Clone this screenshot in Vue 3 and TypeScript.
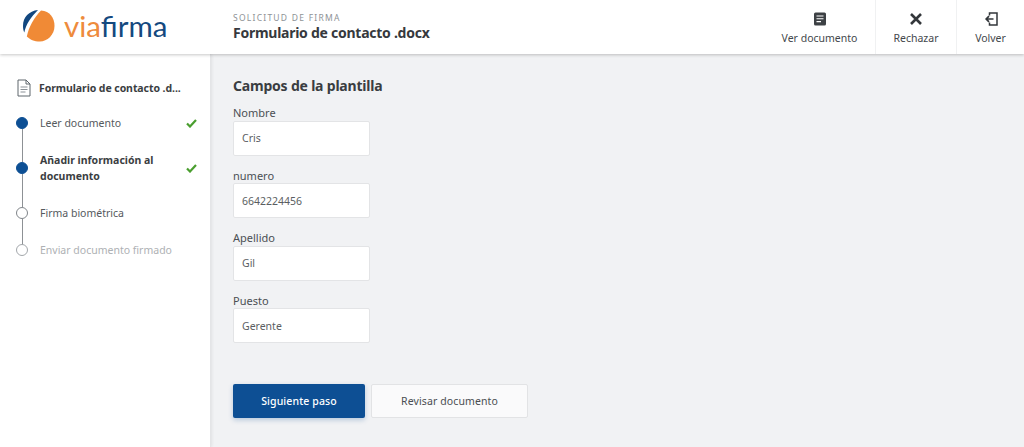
<script setup lang="ts">
interface Step { label: string; state: 'done' | 'current' | 'todo' | 'disabled'; check: boolean; bold?: boolean; line: number }
const steps: Step[] = [
  { label: 'Leer documento', state: 'done', check: true, line: 33 },
  { label: 'Añadir información al documento', state: 'done', check: true, bold: true, line: 33 },
  { label: 'Firma biométrica', state: 'todo', check: false, line: 26 },
  { label: 'Enviar documento firmado', state: 'disabled', check: false, line: 0 },
]
const fields = [
  { label: 'Nombre', value: 'Cris' },
  { label: 'numero', value: '6642224456' },
  { label: 'Apellido', value: 'Gil' },
  { label: 'Puesto', value: 'Gerente' },
]
</script>

<template>
  <div class="page">
    <header class="top">
      <div class="brand">
        <svg class="mark" width="34" height="34" viewBox="0 0 34 34">
          <path d="M16 1C7 2 1 8 1 17c0 2.500.4 4.500 1.300 6.500C4 15 9 8 16 1Z" fill="#12477f"/>
          <path d="M19 1.500C28 2 32.500 9 32.500 17 32.500 26 25 32.500 18 32.500 12 32.500 8 30.500 4.800 27.500 7 17 12 9 19 1.500Z" fill="#f08a36"/>
        </svg>
        <span class="logotext"><span class="via">via</span><span class="firma">firma</span></span>
      </div>
      <div class="heading">
        <div class="eyebrow">SOLICITUD DE FIRMA</div>
        <div class="doc">Formulario de contacto .docx</div>
      </div>
      <nav class="actions">
        <button class="act act-doc">
          <svg width="14" height="14" viewBox="0 0 14 14"><rect x="1" y="0.500" width="12" height="13" rx="1.500" fill="#3d4145"/><path d="M3.500 4h7M3.500 6.800h7M3.500 9.600h4.500" stroke="#fff" stroke-width="1.100"/></svg>
          <span>Ver documento</span>
        </button>
        <button class="act act-rej">
          <svg width="14" height="14" viewBox="0 0 14 14"><path d="M2 2l10 10M12 2L2 12" stroke="#33373b" stroke-width="2.600"/></svg>
          <span>Rechazar</span>
        </button>
        <button class="act act-back">
          <svg width="14" height="14" viewBox="0 0 14 14" fill="none"><path d="M5.500 3.500V1h7.500v12H5.500v-2.500" stroke="#33373b" stroke-width="1.500"/><path d="M9.500 7H2.500M5 4.200L2.200 7 5 9.800" stroke="#33373b" stroke-width="1.700"/></svg>
          <span>Volver</span>
        </button>
      </nav>
    </header>

    <div class="body">
      <aside class="side">
        <div class="file">
          <svg width="14" height="18" viewBox="0 0 14 18" fill="none"><path d="M1 1h8l4 4v12H1Z" fill="#fff" stroke="#5f666d" stroke-width="1"/><path d="M9 1v4h4" stroke="#5f666d"/><path d="M3.500 8h7M3.500 10.500h7M3.500 13h5" stroke="#8b9197"/></svg>
          <span class="filename">Formulario de contacto .d...</span>
        </div>
        <ol class="steps">
          <li v-for="s in steps" :key="s.label" class="step" :class="s.state">
            <span class="dot"><i v-if="s.line" class="link" :style="{ height: s.line + 'px' }"></i></span>
            <span class="label" :class="{ bold: s.bold }">{{ s.label }}</span>
            <svg v-if="s.check" class="check" width="11" height="9" viewBox="0 0 11 9" fill="none"><path d="M1 4.500L4 7.500 10 1" stroke="#4a9e2f" stroke-width="2.200"/></svg>
          </li>
        </ol>
      </aside>

      <main class="main">
        <h2 class="title">Campos de la plantilla</h2>
        <div class="fields">
          <label v-for="f in fields" :key="f.label" class="field">
            <span class="flabel">{{ f.label }}</span>
            <input class="input" :value="f.value" readonly />
          </label>
        </div>
        <div class="buttons">
          <button class="btn primary">Siguiente paso</button>
          <button class="btn ghost">Revisar documento</button>
        </div>
      </main>
    </div>
  </div>
</template>

<style>
html, body { margin: 0; background: #f1f2f4; }
</style>

<style scoped>
* { box-sizing: border-box; }
.page { width: 1024px; height: 447px; overflow: hidden; display: flex; flex-direction: column; font-family: "Noto Sans", "Open Sans", sans-serif; color: #4a4e52; background: #f1f2f4; }
.top { height: 54px; flex: none; display: flex; align-items: center; background: #fff; box-shadow: 0 1px 3px rgba(0,0,0,.22); position: relative; z-index: 2; }
.brand { width: 233px; flex: none; display: flex; align-items: center; padding-left: 22px; gap: 8px; padding-bottom: 2px; }
.mark { flex: none; }
.logotext { font-family: "Lato", sans-serif; font-size: 29.500px; line-height: 34px; letter-spacing: 0; font-weight: 400; }
.via { color: #ee8b3c; }
.firma { color: #14497f; }
.heading { flex: 1; padding-top: 1px; padding-bottom: 2px; }
.eyebrow { font-size: 8.500px; line-height: 12px; letter-spacing: 1.250px; color: #8e9296; }
.doc { font-size: 14px; line-height: 17px; font-weight: 700; color: #36393d; letter-spacing: -0.260px; }
.actions { display: flex; height: 54px; }
.act { border: 0; background: #fff; font: inherit; font-size: 10.500px; color: #44484c; display: flex; flex-direction: column; align-items: center; padding: 12px 0 0; gap: 6px; line-height: 13px; border-left: 1px solid #f0f1f2; }
.act-doc { width: 111px; border-left: 0; }
.act-rej { width: 81px; }
.act-back { width: 68px; }
.body { flex: 1; display: flex; min-height: 0; }
.side { width: 211px; flex: none; background: #fff; border-right: 1px solid #e4e5e7; box-shadow: 1px 0 3px rgba(0,0,0,.07); padding: 25px 13px 0 16px; }
.file { display: flex; align-items: center; gap: 8px; height: 18px; margin-left: 1px; }
.filename { font-size: 10.500px; font-weight: 700; color: #3b3e42; white-space: nowrap; letter-spacing: -0.070px; }
.steps { list-style: none; margin: 18px 0 0; padding: 0; display: flex; flex-direction: column; gap: 21px; }
.step { display: flex; align-items: center; position: relative; font-size: 10.500px; line-height: 16px; color: #55595d; }
.dot { width: 12px; height: 12px; border-radius: 50%; flex: none; position: relative; background: #fff; border: 1px solid #80858a; }
.done .dot { background: #0d4f94; border-color: #0d4f94; }
.disabled .dot { border-color: #a3a7ab; }
.link { position: absolute; left: 4.500px; top: 11px; width: 1px; background: #8d9195; }
.label { margin-left: 12px; width: 132px; }
.bold { font-weight: 700; color: #3b3e42; }
.disabled .label { color: #aeb1b4; white-space: nowrap; }
.check { margin-left: 15px; flex: none; }
.main { flex: 1; padding: 22px 0 0 22px; }
.title { margin: 0; font-size: 14px; line-height: 20px; font-weight: 700; color: #3a3d41; letter-spacing: -0.200px; }
.fields { margin-top: 9.100px; display: flex; flex-direction: column; gap: 11.700px; }
.field { display: block; }
.flabel { display: block; font-size: 11px; line-height: 15.800px; color: #4b4f53; }
.input { display: block; width: 137px; height: 35px; margin: 0; padding: 0 8px; border: 1px solid #e3e4e6; border-radius: 2px; background: #fff; font: inherit; font-size: 10.500px; color: #5a5e62; outline: 0; }
.buttons { display: flex; gap: 6px; margin-top: 40.600px; }
.btn { height: 34px; border-radius: 2px; font: inherit; font-size: 10.500px; padding: 0; letter-spacing: 0.120px; }
.primary { width: 132px; background: #0d4f94; color: #fff; border: 0; box-shadow: 0 2px 5px rgba(13,79,148,.25); font-weight: 500; }
.ghost { width: 157px; background: #fafafb; color: #4a4e52; border: 1px solid #e2e3e5; }
</style>
